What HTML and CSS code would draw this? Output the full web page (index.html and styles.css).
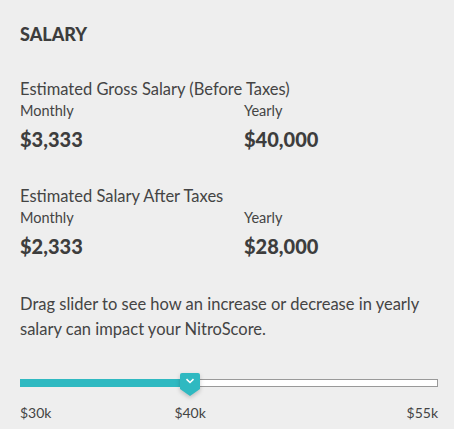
FILE: index.html
```html
<!DOCTYPE html>
<html lang="en">

<head>
    <meta charset="UTF-8">
    <meta name="viewport" content="width=device-width, initial-scale=1.0">
    <title>Salary</title>
    <link rel="stylesheet" href="styles.css">
</head>

<body>
    <div class="panel">
        <h2 class="title">SALARY</h2>

        <div class="block">
            <div class="block-label">Estimated Gross Salary (Before Taxes)</div>
            <div class="cols">
                <div class="col">
                    <div class="col-label">Monthly</div>
                    <div class="amount">$3,333</div>
                </div>
                <div class="col">
                    <div class="col-label">Yearly</div>
                    <div class="amount">$40,000</div>
                </div>
            </div>
        </div>

        <div class="block">
            <div class="block-label">Estimated Salary After Taxes</div>
            <div class="cols">
                <div class="col">
                    <div class="col-label">Monthly</div>
                    <div class="amount">$2,333</div>
                </div>
                <div class="col">
                    <div class="col-label">Yearly</div>
                    <div class="amount">$28,000</div>
                </div>
            </div>
        </div>

        <p class="hint">Drag slider to see how an increase or decrease in yearly salary can impact your NitroScore.</p>

        <div class="slider">
            <div class="track">
                <div class="fill" style="width: 40.7%"></div>
                <div class="thumb" style="left: 40.7%">
                    <svg width="10" height="6" viewBox="0 0 10 6">
                        <path d="M1.5 1.2 L5 4.5 L8.5 1.2" fill="none" stroke="#fff" stroke-width="1.6" />
                    </svg>
                </div>
            </div>
            <div class="ticks">
                <span>$30k</span>
                <span class="tick-mid" style="left: 40.7%">$40k</span>
                <span>$55k</span>
            </div>
        </div>
    </div>
</body>

</html>
```

FILE: styles.css
```css
body {
    margin: 0;
    background: #eeeeee;
    font-family: Lato, "Open Sans", sans-serif;
    color: #444;
}

.panel {
    padding: 22px 16px 0 20px;
}

.title {
    margin: 0 0 32px;
    font-size: 18px;
    font-weight: 900;
    line-height: 24px;
    color: #3d3d3d;
}

.block {
    margin-bottom: 33px;
}

.block-label {
    font-size: 16.5px;
    font-weight: 400;
    line-height: 22px;
}

.cols {
    display: flex;
}

.col {
    flex: 0 0 224px;
}

.col-label {
    font-size: 14.5px;
    font-weight: 400;
    line-height: 22px;
}

.amount {
    margin-top: 4px;
    font-size: 20px;
    font-weight: 900;
    line-height: 26px;
    color: #3d3d3d;
}

.hint {
    margin: 1px 0 0;
    font-size: 16.5px;
    font-weight: 400;
    line-height: 25px;
}

.slider {
    margin-top: 37px;
}

.track {
    position: relative;
    height: 6px;
    border: 1px solid #999;
    background: #fff;
}

.fill {
    position: absolute;
    top: -1px;
    left: -1px;
    height: 8px;
    background: #2fb9c1;
}

.thumb {
    position: absolute;
    top: -7px;
    width: 20px;
    height: 16px;
    margin-left: -10px;
    background: #2fb9c1;
    border-radius: 2px 2px 0 0;
    display: flex;
    align-items: center;
    justify-content: center;
    filter: drop-shadow(0 2px 2px rgba(0, 0, 0, 0.2));
}

.thumb::after {
    content: "";
    position: absolute;
    top: 16px;
    left: 0;
    border-left: 10px solid transparent;
    border-right: 10px solid transparent;
    border-top: 7px solid #2fb9c1;
}

.ticks {
    position: relative;
    display: flex;
    justify-content: space-between;
    margin-top: 16px;
    font-size: 14px;
    font-weight: 400;
    line-height: 20px;
}

.tick-mid {
    position: absolute;
    transform: translateX(-50%);
}
```
